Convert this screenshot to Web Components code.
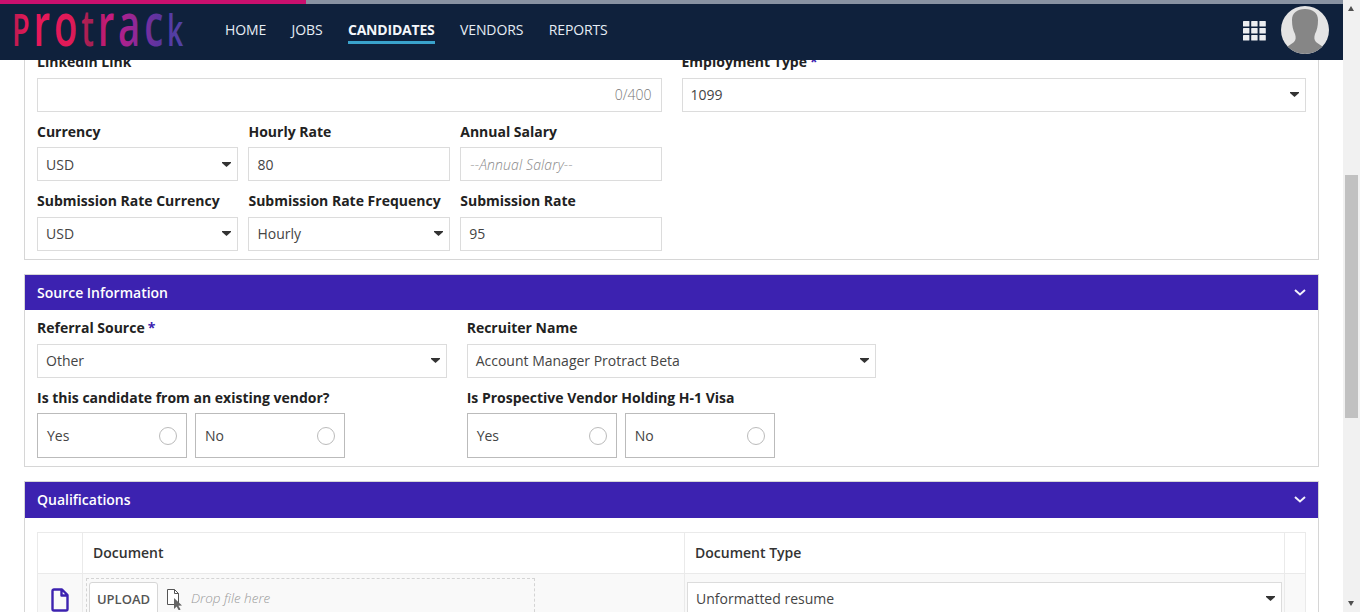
<!DOCTYPE html>
<html lang="en">
<head>
<meta charset="utf-8">
<title>Protrack</title>
<style>
html, body { margin: 0; height: 100%; overflow: hidden; background: #fff; }
body { font-family: "Open Sans", "Liberation Sans", sans-serif; font-size: 14px; color: #444; }
</style>
</head>
<body>
<app-shell>
    <app-header slot="header"></app-header>

    <form-panel plain>
        <form-grid cols="1fr 1fr">
            <form-field label="Linkedin Link"><text-box counter="0/400"></text-box></form-field>
            <form-field label="Employment Type" required><select-box>1099</select-box></form-field>
        </form-grid>
        <form-grid cols="1fr 1fr">
            <form-grid cols="201.45px 201.8px 1fr" gap="10">
                <form-field label="Currency"><select-box>USD</select-box></form-field>
                <form-field label="Hourly Rate"><text-box>80</text-box></form-field>
                <form-field label="Annual Salary"><text-box placeholder="--Annual Salary--"></text-box></form-field>
            </form-grid>
        </form-grid>
        <form-grid cols="1fr 1fr">
            <form-grid cols="201.45px 201.8px 1fr" gap="10">
                <form-field label="Submission Rate Currency"><select-box>USD</select-box></form-field>
                <form-field label="Submission Rate Frequency"><select-box>Hourly</select-box></form-field>
                <form-field label="Submission Rate"><text-box>95</text-box></form-field>
            </form-grid>
        </form-grid>
    </form-panel>

    <form-panel title="Source Information" head="35">
        <form-grid cols="1fr 1fr 1fr">
            <form-field label="Referral Source" required gap="6"><select-box>Other</select-box></form-field>
            <form-field label="Recruiter Name" gap="6"><select-box>Account Manager Protract Beta</select-box></form-field>
        </form-grid>
        <form-grid cols="1fr 1fr 1fr">
            <form-field label="Is this candidate from an existing vendor?" gap="5"><yes-no></yes-no></form-field>
            <form-field label="Is Prospective Vendor Holding H-1 Visa" gap="5"><yes-no></yes-no></form-field>
        </form-grid>
    </form-panel>

    <form-panel title="Qualifications" head="36" flush>
        <doc-table></doc-table>
    </form-panel>
</app-shell>

<script>
// page frame: content column, fake scrollbar on the right
class AppShell extends HTMLElement {
    constructor() {
        super();
        this.attachShadow({ mode: "open" });
    }

    connectedCallback() {
        this.shadowRoot.innerHTML = `
            <style>
                :host { display: flex; width: 1360px; height: 612px; overflow: hidden; }
                .page { position: relative; width: 1343px; height: 612px; overflow: hidden; }
                .content {
                    display: flex;
                    flex-direction: column;
                    gap: 14px;
                    padding: 40px 24px 0;
                }
                .bar { position: relative; width: 17px; height: 612px; background: #f1f1f1; }
                .thumb { position: absolute; left: 2px; top: 175px; width: 13px; height: 243px; background: #c1c1c1; }
                .up, .down { position: absolute; left: 5px; width: 0; height: 0; border-left: 3.5px solid transparent; border-right: 3.5px solid transparent; }
                .up { top: 6px; border-bottom: 5px solid #505050; }
                .down { bottom: 6px; border-top: 5px solid #505050; }
                ::slotted(app-header) { position: absolute; left: 0; top: 0; z-index: 5; }
            </style>
            <div class="page">
                <slot name="header"></slot>
                <div class="content"><slot></slot></div>
            </div>
            <div class="bar">
                <div class="up"></div>
                <div class="thumb"></div>
                <div class="down"></div>
            </div>
        `;
    }
}

// top navigation
class AppHeader extends HTMLElement {
    constructor() {
        super();
        this.attachShadow({ mode: "open" });
    }

    connectedCallback() {
        const items = ["HOME", "JOBS", "CANDIDATES", "VENDORS", "REPORTS"];
        const links = items
            .map((t) => `<a class="${t === "CANDIDATES" ? "on" : ""}">${t}</a>`)
            .join("");
        let cells = "";
        for (let y = 0; y < 3; y++) {
            for (let x = 0; x < 3; x++) {
                cells += `<rect x="${x * 8.2}" y="${y * 7}" width="6.4" height="5.6" rx=".6"/>`;
            }
        }
        this.shadowRoot.innerHTML = `
            <style>
                :host { display: block; width: 1343px; height: 60px; background: #0f213c; }
                .progress { height: 4px; background: linear-gradient(to right, #c9106e 306px, #8892a2 306px); }
                .row { display: flex; align-items: center; height: 56px; }
                .logo { display: block; margin-left: 13px; width: 172px; height: 40px; }
                nav { display: flex; gap: 25.5px; margin-left: 40px; }
                a { position: relative; display: block; padding: 0 0 4px; line-height: 20px; color: #e6edf5; font-size: 14px; letter-spacing: -.13px; }
                a.on { font-weight: 700; color: #f4f7fb; letter-spacing: -.2px; }
                a.on::after { content: ""; position: absolute; left: 0; right: 0; bottom: 0; height: 3px; background: #3aa3cc; }
                .apps { margin-left: auto; display: block; margin-top: -2px; }
                .avatar { display: block; margin: -4px 14px 0 15px; }
            </style>
            <div class="progress"></div>
            <div class="row">
                <svg class="logo" viewBox="0 0 172 40">
                    <defs>
                        <linearGradient id="lg" x1="0" x2="1" y1="0" y2="0">
                            <stop offset="0" stop-color="#b91c4f"/>
                            <stop offset=".1" stop-color="#e8185a"/>
                            <stop offset=".34" stop-color="#e01a58"/>
                            <stop offset=".44" stop-color="#a52052"/>
                            <stop offset=".56" stop-color="#c81a80"/>
                            <stop offset=".72" stop-color="#8a2a9a"/>
                            <stop offset=".84" stop-color="#5a35a0"/>
                            <stop offset="1" stop-color="#4d45a8"/>
                        </linearGradient>
                    </defs>
                    <text x="-1" y="34" textLength="175" lengthAdjust="spacingAndGlyphs" font-family="Open Sans" font-weight="600" fill="url(#lg)" letter-spacing="6"><tspan font-size="45">P</tspan><tspan font-size="60">ro</tspan><tspan font-size="50">t</tspan><tspan font-size="60">rac</tspan><tspan font-size="44">k</tspan></text>
                </svg>
                <nav>${links}</nav>
                <svg class="apps" width="23" height="20" viewBox="0 0 23 20" fill="#eceef0">${cells}</svg>
                <svg class="avatar" width="48" height="48" viewBox="0 0 48 48">
                    <defs><clipPath id="av"><circle cx="24" cy="24" r="24"/></clipPath></defs>
                    <circle cx="24" cy="24" r="24" fill="#e4e4e4"/>
                    <path clip-path="url(#av)" fill="#868686" d="M24 3c-8 0-13 4-13 11 0 6 1 10 3 14 1 3 1 6-1 8-2 2-5 3-7 5 4 4 12 7 18 7s14-3 18-7c-2-2-5-3-7-5-2-2-2-5-1-8 2-4 3-8 3-14 0-7-5-11-13-11z"/>
                </svg>
            </div>
        `;
    }
}

// card with optional purple title bar
class FormPanel extends HTMLElement {
    constructor() {
        super();
        this.attachShadow({ mode: "open" });
    }

    connectedCallback() {
        const title = this.getAttribute("title");
        const headH = this.getAttribute("head") || 35;
        const plain = this.hasAttribute("plain");
        const flush = this.hasAttribute("flush");
        const head = title
            ? `<div class="head"><span>${title}</span>
                <svg width="12" height="7" viewBox="0 0 12 7" fill="none" stroke="#f3f1fb" stroke-width="2"><path d="M1 1l5 4.400L11 1"/></svg>
               </div>`
            : "";
        const pad = plain ? "11.02px 12px 8.48px" : flush ? "14px 12px 0" : "8px 12px";
        this.shadowRoot.innerHTML = `
            <style>
                :host { display: block; flex: none; border: 1px solid #d6d6d6; background: #fff; }
                .head {
                    display: flex;
                    align-items: center;
                    justify-content: space-between;
                    height: ${headH}px;
                    padding: 0 12px;
                    background: #3c22b0;
                    color: #fff;
                    font-weight: 600;
                }
                .body {
                    display: flex;
                    flex-direction: column;
                    gap: 10px;
                    padding: ${pad};
                }
            </style>
            ${head}
            <div class="body"><slot></slot></div>
        `;
    }
}

class FormGrid extends HTMLElement {
    constructor() {
        super();
        this.attachShadow({ mode: "open" });
    }

    connectedCallback() {
        const cols = this.getAttribute("cols") || "1fr 1fr";
        const gap = this.getAttribute("gap") || 20;
        this.shadowRoot.innerHTML = `
            <style>
                :host { display: grid; grid-template-columns: ${cols}; column-gap: ${gap}px; min-width: 0; }
            </style>
            <slot></slot>
        `;
    }
}

// label + control
class FormField extends HTMLElement {
    constructor() {
        super();
        this.attachShadow({ mode: "open" });
    }

    connectedCallback() {
        const label = this.getAttribute("label") || "";
        const gap = this.getAttribute("gap") || 5.5;
        const star = this.hasAttribute("required") ? `<b>*</b>` : "";
        this.shadowRoot.innerHTML = `
            <style>
                :host { display: block; min-width: 0; }
                label { display: block; height: 20px; line-height: 20px; margin-bottom: ${gap}px; color: #222; font-weight: 700; font-size: 14px; white-space: nowrap; }
                b { margin-left: 3px; color: #3c22b0; font-weight: 700; }
            </style>
            <label>${label}${star}</label>
            <slot></slot>
        `;
    }
}

class TextBox extends HTMLElement {
    constructor() {
        super();
        this.attachShadow({ mode: "open" });
    }

    connectedCallback() {
        const counter = this.getAttribute("counter");
        const placeholder = this.getAttribute("placeholder");
        this.shadowRoot.innerHTML = `
            <style>
                :host { display: flex; align-items: center; box-sizing: border-box; height: 34px; padding: 0 9px 0 8px; border: 1px solid #dcdcdc; background: #fff; color: #444; }
                .ph { margin-left: 1px; color: #888; font-style: italic; font-weight: 300; letter-spacing: .12px; }
                .count { margin-left: auto; color: #777; font-weight: 300; }
            </style>
            <slot></slot>
            ${placeholder ? `<span class="ph">${placeholder}</span>` : ""}
            ${counter ? `<span class="count">${counter}</span>` : ""}
        `;
    }
}

class SelectBox extends HTMLElement {
    constructor() {
        super();
        this.attachShadow({ mode: "open" });
    }

    connectedCallback() {
        this.shadowRoot.innerHTML = `
            <style>
                :host { display: flex; align-items: center; justify-content: space-between; box-sizing: border-box; height: 34px; padding: 0 6px 0 8px; border: 1px solid #dcdcdc; background: #fff; color: #444; }
                svg { display: block; }
            </style>
            <slot></slot>
            <svg width="9" height="5" viewBox="0 0 9 5" fill="#333"><path d="M0 0h9v1L4.500 5 0 1z"/></svg>
        `;
    }
}

// pair of Yes / No radio tiles
class YesNo extends HTMLElement {
    constructor() {
        super();
        this.attachShadow({ mode: "open" });
    }

    connectedCallback() {
        const tile = (t) => `<div class="tile"><span>${t}</span><i></i></div>`;
        this.shadowRoot.innerHTML = `
            <style>
                :host { display: flex; gap: 8px; }
                .tile { display: flex; align-items: center; justify-content: space-between; box-sizing: border-box; width: 150px; height: 45px; padding: 0 9px; border: 1px solid #bbb; color: #444; }
                i { box-sizing: border-box; width: 18px; height: 18px; margin-top: 1px; border: 1px solid #bbb; border-radius: 50%; }
            </style>
            ${tile("Yes")}${tile("No")}
        `;
    }
}

// documents table, cut by the window bottom
class DocTable extends HTMLElement {
    constructor() {
        super();
        this.attachShadow({ mode: "open" });
    }

    connectedCallback() {
        this.shadowRoot.innerHTML = `
            <style>
                :host { display: grid; grid-template-columns: 45px 602px 600px 1fr; border-top: 1px solid #eaeaea; border-right: 1px solid #eaeaea; color: #222; }
                .c { box-sizing: border-box; border-left: 1px solid #eaeaea; }
                .h { height: 41px; border-bottom: 1px solid #eaeaea; padding: 0 10px; line-height: 40px; font-weight: 600; color: #333; }
                .r { height: 70px; background: #f9f9f9; }
                .icon { display: flex; justify-content: center; padding-top: 14px; }
                .doc { padding: 4px 0 0 3px; }
                .drop { display: flex; box-sizing: border-box; width: 449px; height: 60px; padding: 3px 2px; border: 1px dashed #d4d4d4; }
                .btn { box-sizing: border-box; width: 69px; height: 36px; border: 1px solid #d6d6d6; border-radius: 3px; background: #fff; color: #555; font-size: 13px; font-weight: 600; line-height: 32px; text-align: center; }
                .hint { display: flex; align-items: flex-start; gap: 7px; margin-left: 9px; padding-top: 6px; color: #999; font-size: 13.5px; font-style: italic; font-weight: 300; line-height: 20px; }
                .hint svg { margin-top: 1px; }
                .type { padding: 8px 2px 0; }
            </style>
            <div class="c h"></div>
            <div class="c h">Document</div>
            <div class="c h">Document Type</div>
            <div class="c h"></div>
            <div class="c r icon">
                <svg width="18" height="24" viewBox="0 0 18 24" fill="none" stroke="#3c22b0" stroke-width="2.4" stroke-linejoin="round"><path d="M1.500 3a1.500 1.500 0 0 1 1.500-1.500h8L16.500 7v14a1.500 1.500 0 0 1-1.500 1.500H3A1.500 1.500 0 0 1 1.500 21zM10.500 1.500V7.500h6"/></svg>
            </div>
            <div class="c r doc">
                <div class="drop">
                    <div class="btn">UPLOAD</div>
                    <div class="hint">
                        <svg width="17" height="21" viewBox="0 0 17 21"><path d="M.5.5h7l4 4v11H.5z" fill="#fff" stroke="#555"/><path d="M7.500.5v4h4" fill="none" stroke="#555"/><path d="M7 9l8 7.500-3.600.3 2.200 3.800-1.800.9-2.100-3.900L7 20z" fill="#666"/></svg>
                        <span>Drop file here</span>
                    </div>
                </div>
            </div>
            <div class="c r type"><select-box>Unformatted resume</select-box></div>
            <div class="c r"></div>
        `;
    }
}

// 注册自定义元素
customElements.define("app-shell", AppShell);
customElements.define("app-header", AppHeader);
customElements.define("form-panel", FormPanel);
customElements.define("form-grid", FormGrid);
customElements.define("form-field", FormField);
customElements.define("text-box", TextBox);
customElements.define("select-box", SelectBox);
customElements.define("yes-no", YesNo);
customElements.define("doc-table", DocTable);
</script>
</body>
</html>
